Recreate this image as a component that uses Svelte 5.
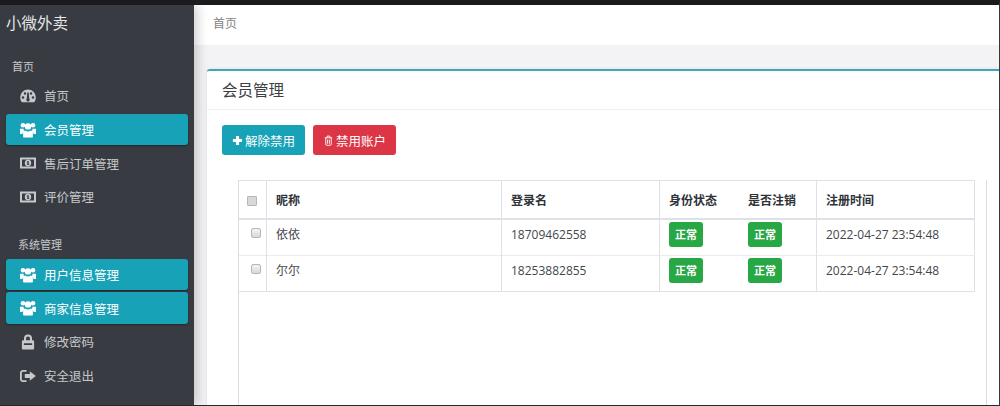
<script>
  const topMenu = [
    { label: "首页", icon: "gauge" },
    { label: "会员管理", icon: "users", active: true },
    { label: "售后订单管理", icon: "money" },
    { label: "评价管理", icon: "money" },
  ];
  const sysMenu = [
    { label: "用户信息管理", icon: "users", active: true },
    { label: "商家信息管理", icon: "users", active: true },
    { label: "修改密码", icon: "lock" },
    { label: "安全退出", icon: "exit" },
  ];
  const rows = [
    { nick: "依依", login: "18709462558", time: "2022-04-27 23:54:48" },
    { nick: "尔尔", login: "18253882855", time: "2022-04-27 23:54:48" },
  ];
</script>

{#snippet icon(name)}
  <svg class="ico" viewBox="0 0 16 16" aria-hidden="true">
    {#if name === "gauge"}
      <path fill="currentColor" fill-rule="evenodd" d="M8 1.500a7.800 7.800 0 0 1 7.800 7.800c0 2-.6 3.700-1.600 5H1.800A7.800 7.800 0 0 1 .2 9.300 7.800 7.800 0 0 1 8 1.500zM3 8.200a1.300 1.300 0 1 0 0 2.600 1.300 1.300 0 0 0 0-2.600zM5 4.300a1.200 1.200 0 1 0 0 2.400 1.200 1.200 0 0 0 0-2.400zM11 4.300a1.200 1.200 0 1 0 0 2.400 1.200 1.200 0 0 0 0-2.400zM13 8.200a1.300 1.300 0 1 0 0 2.600 1.300 1.300 0 0 0 0-2.600zM7.300 4.500l-.5 6a1.700 1.700 0 1 0 2.400 0l-.5-6z"/>
    {:else if name === "users"}
      <g fill="currentColor">
        <circle cx="3" cy="3.300" r="2.300"/>
        <circle cx="13" cy="3.300" r="2.300"/>
        <circle cx="8" cy="4.400" r="3.200"/>
        <path d="M0 6.800h3.500a4.200 4.200 0 0 0 1.300 3.200c-1.300.4-2.100 1.100-2.400 2H0zM16 6.800h-3.500a4.200 4.200 0 0 1-1.300 3.200c1.300.4 2.100 1.100 2.400 2H16z"/>
        <path d="M5.200 8.600c.8.700 1.700 1 2.800 1s2-.3 2.800-1c1 .2 2.100 1.200 2.100 3.200v2.700c0 .6-.4 1-1 1H4.100c-.6 0-1-.4-1-1v-2.700c0-2 1.100-3 2.100-3.200z"/>
      </g>
    {:else if name === "money"}
      <path fill="currentColor" fill-rule="evenodd" d="M0 2.500h16v11H0zM2 4.500v7h12v-7zM8 4.800a3.200 3.200 0 1 1 0 6.400 3.200 3.200 0 0 1 0-6.400z"/>
      <path fill="#383c42" d="M7.400 6.200h1.400v3.200h.7v.7H6.700v-.7h.7V7.200l-.6.300-.3-.6z"/>
    {:else if name === "lock"}
      <path fill="currentColor" fill-rule="evenodd" d="M8 .5c2.600 0 4 1.600 4 3.700v2h.8c.8 0 1.300.6 1.300 1.300v6.700c0 .7-.5 1.300-1.300 1.300H3.200c-.8 0-1.300-.6-1.300-1.300V7.500c0-.7.5-1.300 1.300-1.300H4v-2C4 2.100 5.400.5 8 .5zM8 2.400c-1.100 0-1.900.7-1.900 1.900v1.900h3.800V4.300c0-1.200-.8-1.900-1.900-1.900zM3.900 9.200v1.800h8.200V9.200z"/>
    {:else if name === "exit"}
      <g fill="currentColor">
        <path d="M6.500 2v1.700H3.200C2.300 3.700 1.800 4.300 1.800 5.100v5.800c0 .8.500 1.400 1.400 1.400h3.300V14H3c-1.700 0-3-1.300-3-3V5c0-1.700 1.300-3 3-3z"/>
        <path d="M9.800 3.200 15.800 8l-6 4.800V10H4.800V6h5z"/>
      </g>
    {/if}
  </svg>
{/snippet}

{#snippet navItem(item)}
  <a class="nav-item" class:active={item.active} href="#top">
    {@render icon(item.icon)}
    <span>{item.label}</span>
  </a>
{/snippet}

<div class="page">
  <aside class="sidebar">
    <div class="brand">小微外卖</div>
    <div class="group-label">首页</div>
    <nav class="nav">
      {#each topMenu as item}
        {@render navItem(item)}
      {/each}
    </nav>
    <div class="group-label sys">系统管理</div>
    <nav class="nav">
      {#each sysMenu as item}
        {@render navItem(item)}
      {/each}
    </nav>
  </aside>

  <main class="main">
    <header class="crumb">首页</header>
    <section class="card">
      <h2 class="card-title">会员管理</h2>
      <div class="card-body">
        <div class="toolbar">
          <button class="btn teal">
            <svg class="btn-ico" viewBox="0 0 12 12" aria-hidden="true">
              <path fill="currentColor" d="M4.300 1h3.400v3.300H11v3.400H7.700V11H4.300V7.700H1V4.300h3.300z"/>
            </svg>
            解除禁用
          </button>
          <button class="btn red">
            <svg class="btn-ico" viewBox="0 0 12 12" aria-hidden="true">
              <path fill="none" stroke="currentColor" stroke-width="1" d="M2 3h8M4.500 3V1.200h3V3M3 3v7.300c0 .5.300.9.800.9h4.400c.5 0 .8-.4.800-.9V3M5 5v4.500M7 5v4.500"/>
            </svg>
            禁用账户
          </button>
        </div>
        <div class="table-box">
          <table>
            <thead>
              <tr>
                <th class="c-check"><span class="check head"></span></th>
                <th class="c-nick">昵称</th>
                <th class="c-login">登录名</th>
                <th class="c-status">身份状态</th>
                <th class="c-cancel plain-left">是否注销</th>
                <th>注册时间</th>
              </tr>
            </thead>
            <tbody>
              {#each rows as row}
                <tr>
                  <td class="c-check"><span class="check"></span></td>
                  <td>{row.nick}</td>
                  <td>{row.login}</td>
                  <td class="tag-cell"><span class="badge">正常</span></td>
                  <td class="tag-cell plain-left"><span class="badge">正常</span></td>
                  <td>{row.time}</td>
                </tr>
              {/each}
            </tbody>
          </table>
        </div>
      </div>
    </section>
  </main>
</div>

<style>
  :global(body) {
    margin: 0;
    background: #f3f3f6;
  }
  .page {
    display: flex;
    box-sizing: border-box;
    width: 1000px;
    height: 406px;
    overflow: hidden;
    border-top: 5px solid #1b1b1d;
    border-bottom: 1px solid #25272b;
    border-right: 1px solid #34373c;
    font-family: "Open Sans", "Noto Sans CJK SC", sans-serif;
    font-size: 12px;
    color: #43474c;
  }
  .sidebar {
    position: relative;
    z-index: 1;
    flex: 0 0 194px;
    background: #383c42;
    color: #c6c8cb;
    box-shadow: 4px 0 10px rgba(0, 0, 0, 0.18);
  }
  .brand {
    padding: 8px 0 0 6px;
    height: 32px;
    font-size: 15.500px;
    line-height: 20px;
    color: #e4e5e6;
  }
  .group-label {
    padding-left: 12px;
    margin-top: 13px;
    height: 22px;
    font-size: 11px;
    line-height: 17px;
  }
  .group-label.sys {
    padding-left: 18px;
    margin-top: 21px;
    height: 17px;
    margin-bottom: 6px;
  }
  .nav {
    display: flex;
    flex-direction: column;
    margin: 0 6px;
  }
  .nav-item {
    display: flex;
    align-items: center;
    gap: 8px;
    box-sizing: border-box;
    height: 31.700px;
    margin-bottom: 2px;
    padding-left: 14px;
    border-radius: 3px;
    color: #c6c8cb;
    font-size: 12.500px;
    text-decoration: none;
  }
  .nav-item.active {
    background: #17a2b8;
    color: #fff;
    box-shadow: 0 1px 2px rgba(0, 0, 0, 0.35);
  }
  .ico {
    width: 16px;
    height: 16px;
    flex: none;
  }
  .main {
    flex: 1;
    min-width: 0;
    display: flex;
    flex-direction: column;
  }
  .crumb {
    flex: none;
    box-sizing: border-box;
    height: 40px;
    padding: 10px 0 0 19px;
    background: #fff;
    line-height: 18px;
    color: #808387;
  }
  .card {
    flex: 1;
    margin: 24px 0 0 13px;
    background: #fff;
    border-top: 2px solid #3ea7b8;
    border-radius: 3px 0 0 0;
    box-shadow: 0 0 3px rgba(0, 0, 0, 0.1);
  }
  .card-title {
    margin: 0;
    box-sizing: border-box;
    height: 39px;
    padding: 9px 0 0 15px;
    border-bottom: 1px solid #f1f1f2;
    font-size: 15.500px;
    font-weight: 400;
    line-height: 20px;
    color: #3c4045;
  }
  .card-body {
    padding: 15px 0 0 15px;
  }
  .toolbar {
    display: flex;
    gap: 8px;
  }
  .btn {
    display: flex;
    align-items: center;
    justify-content: center;
    gap: 2px;
    width: 83px;
    height: 30px;
    padding: 0;
    border: 0;
    border-radius: 3px;
    font: inherit;
    font-size: 12.500px;
    color: #fff;
  }
  .btn.teal {
    background: #17a2b8;
  }
  .btn.red {
    background: #dc3545;
  }
  .btn-ico {
    width: 11px;
    height: 11px;
  }
  .table-box {
    box-sizing: border-box;
    width: 749px;
    height: 230px;
    margin: 25px 0 0 16px;
    border-left: 1px solid #dcdde0;
    border-right: 1px solid #dcdde0;
  }
  table {
    width: 736px;
    border-collapse: collapse;
    table-layout: fixed;
    border-top: 1px solid #dee2e6;
    border-bottom: 1px solid #dee2e6;
    border-right: 1px solid #dee2e6;
  }
  th {
    height: 37px;
    padding: 0 11px 0 9px;
    border-left: 1px solid #dee2e6;
    border-bottom: 2px solid #dee2e6;
    text-align: left;
    font-weight: 700;
    color: #2f3338;
  }
  td {
    height: 36px;
    padding: 5px 11px 0 9px;
    box-sizing: border-box;
    vertical-align: top;
    border-left: 1px solid #dee2e6;
    border-top: 1px solid #e9ebee;
    line-height: 20px;
  }
  th:first-child,
  td:first-child {
    border-left: 0;
  }
  th.plain-left,
  td.plain-left {
    border-left: 0;
    padding-left: 10px;
    padding-right: 10px;
  }
  td.tag-cell {
    padding-top: 2px;
  }
  .c-check,
  td.c-check {
    width: 27px;
    padding: 0;
    text-align: center;
  }
  .c-nick {
    width: 214px;
  }
  .c-login {
    width: 137px;
  }
  .c-status {
    width: 58px;
  }
  .c-cancel {
    width: 58px;
  }
  .check {
    display: inline-block;
    box-sizing: border-box;
    width: 10px;
    height: 10px;
    margin: 8px 0 0 6px;
    border: 1px solid #b5b6b8;
    border-radius: 2px;
    background: linear-gradient(#f4f4f4, #d9d9d9);
  }
  .check.head {
    margin: 0 1px 0 0;
    border-radius: 1px;
    background: #d8d8d8;
    vertical-align: middle;
  }
  .badge {
    display: inline-block;
    width: 34px;
    height: 25px;
    border-radius: 3px;
    background: #28a745;
    color: #fff;
    font-size: 11px;
    font-weight: 700;
    line-height: 25px;
    text-align: center;
  }
</style>
